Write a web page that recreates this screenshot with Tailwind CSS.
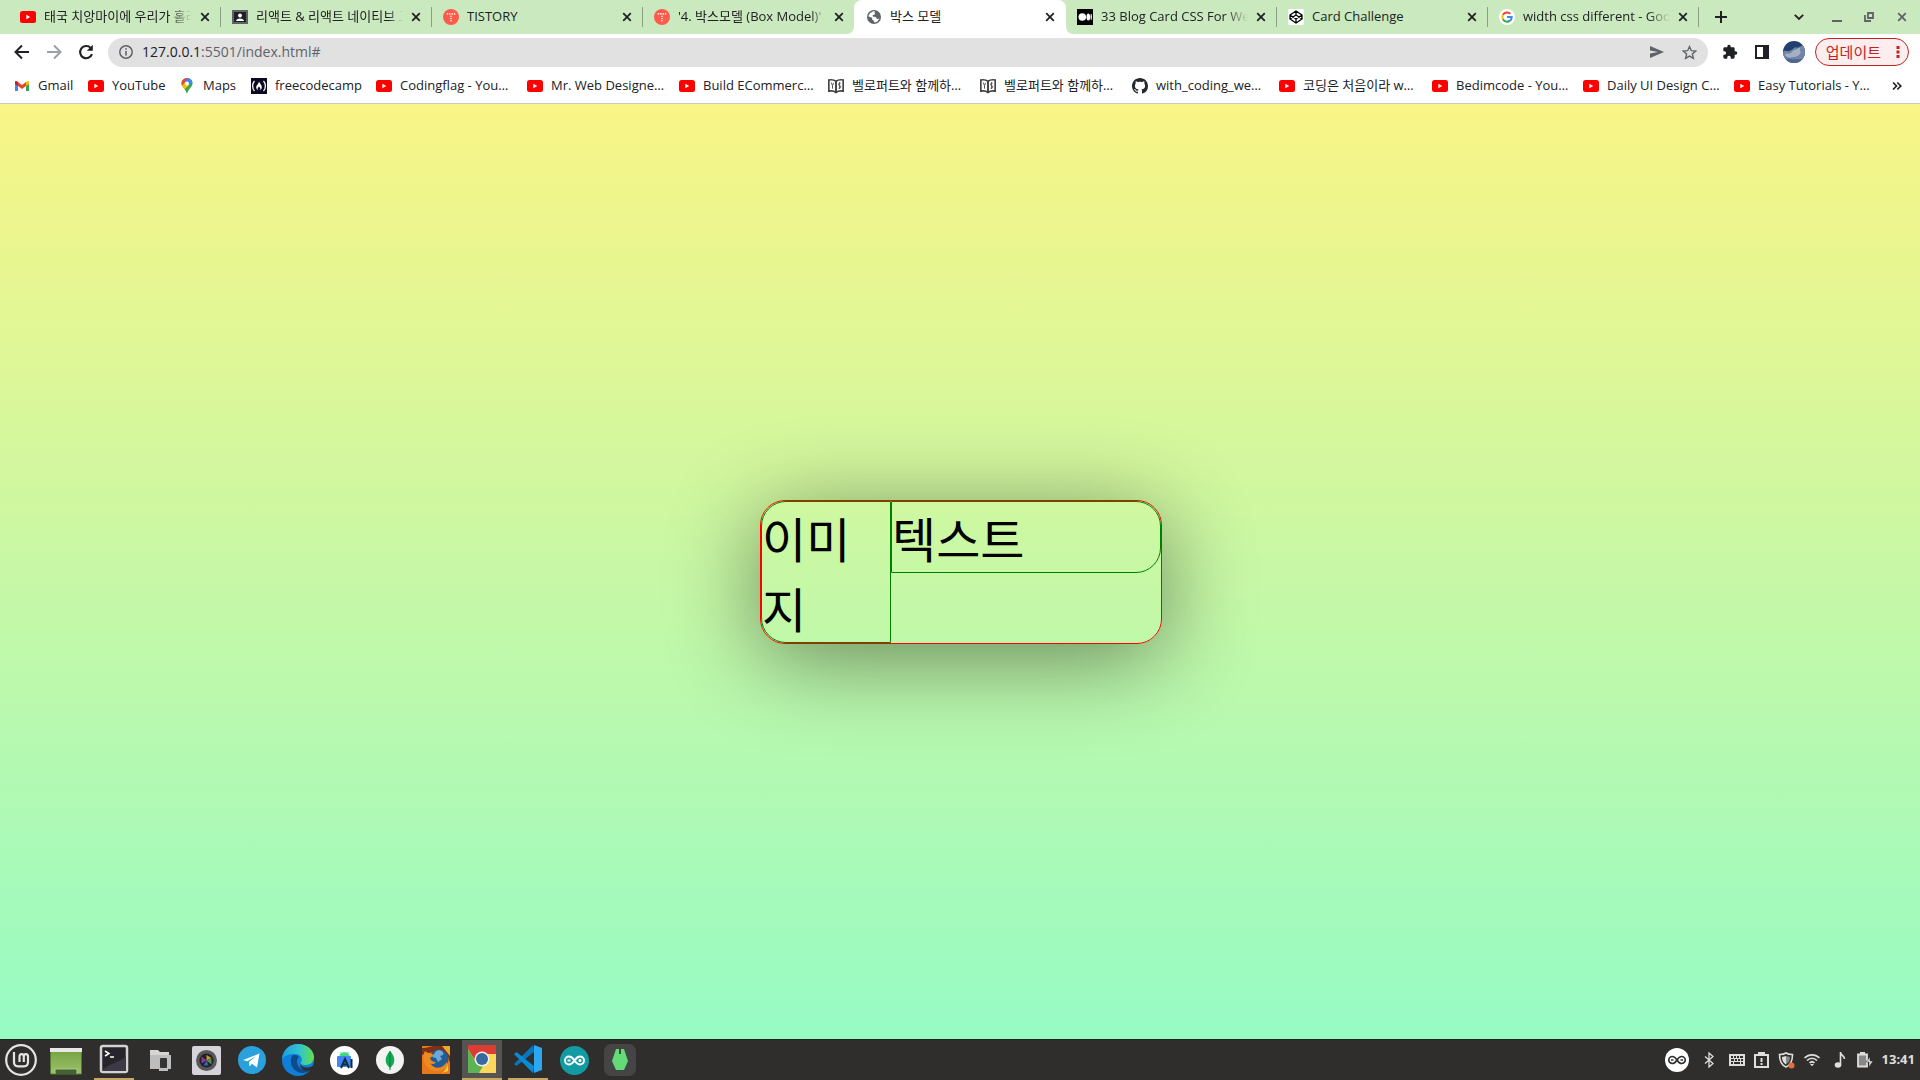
<!DOCTYPE html>
<html lang="ko">
<head>
<meta charset="utf-8">
<title>박스 모델</title>
<script src="https://cdn.jsdelivr.net/npm/@tailwindcss/browser@4"></script>
</head>
<body class="flex h-screen flex-col overflow-hidden bg-white font-['Open_Sans','Noto_Sans_CJK_KR',sans-serif] text-[13px] text-[#202124]">

<svg class="hidden" aria-hidden="true">
  <symbol id="yt" viewBox="0 0 16 16"><rect y="2" width="16" height="12" rx="2.5" fill="#f00"/><path d="M6.3 5.8v4.4L10.2 8z" fill="#fff"/></symbol>
  <symbol id="x" viewBox="0 0 10 10"><path d="M1.2 1.2l7.6 7.6M8.8 1.2L1.2 8.8" stroke="currentColor" stroke-width="1.8"/></symbol>
  <symbol id="tistory" viewBox="0 0 16 16"><circle cx="8" cy="8" r="8" fill="#ff5a4a"/><g fill="#fff"><circle cx="4.4" cy="4.9" r=".8"/><circle cx="6.8" cy="4.9" r=".8"/><circle cx="9.2" cy="4.9" r=".8"/><circle cx="11.6" cy="4.9" r=".8"/><circle cx="8" cy="7.2" r=".8"/><circle cx="8" cy="9.5" r=".8"/><circle cx="8" cy="11.8" r=".8"/></g></symbol>
  <symbol id="book" viewBox="0 0 16 16"><path d="M8 3.2C6 1.8 3.500 1.500.8 2v11.200c2.700-.5 5.200-.2 7.200 1.300 2-1.500 4.500-1.800 7.200-1.300V2C12.500 1.500 10 1.800 8 3.200zv11" fill="none" stroke="#444" stroke-width="1.700"/><path d="M3.200 4.500l1.300 3 1.200-2.700M4.500 7.500v3.200M12.500 5c-2.500-.3-2.500 2.300-1.200 2.500 2.500.4 1.500 3.300-.8 2.700M11.600 4v7" fill="none" stroke="#555" stroke-width="1"/><path d="M8 3v11" stroke="#444" stroke-width="1.700"/></symbol>
</svg>

<header class="shrink-0 border-b border-[#c8c8d0]">
  <div class="flex h-[34px] items-center bg-[#cbe9be] pl-[10px]">
    <nav class="flex h-full min-w-0 shrink-0 items-center" aria-label="탭">
      <div class="flex h-5 w-[211px] items-center gap-2 border-r border-[#8a9f83] pr-[10px] pl-[10px]">
        <svg class="size-4 shrink-0"><use href="#yt"/></svg>
        <span class="min-w-0 grow overflow-hidden mask-r-from-85% whitespace-nowrap">태국 치앙마이에 우리가 홀라</span>
        <button class="shrink-0" aria-label="닫기"><svg class="size-[10px]"><use href="#x"/></svg></button>
      </div>
      <div class="flex h-5 w-[211px] items-center gap-2 border-r border-[#8a9f83] pr-[10px] pl-[11px]">
        <svg class="size-4 shrink-0" viewBox="0 0 16 16"><path d="M0 1h16v14H0z" fill="#5f6368"/><path d="M2 3h12v10H2z" fill="#202124"/><circle cx="8" cy="6.500" r="1.900" fill="#fff"/><path d="M4 12c0-3.500 8-3.500 8 0z" fill="#fff"/></svg>
        <span class="min-w-0 grow overflow-hidden mask-r-from-90% whitespace-nowrap">리액트 &amp; 리액트 네이티브 고</span>
        <button class="shrink-0" aria-label="닫기"><svg class="size-[10px]"><use href="#x"/></svg></button>
      </div>
      <div class="flex h-5 w-[211px] items-center gap-2 border-r border-[#8a9f83] pr-[10px] pl-[11px]">
        <svg class="size-4 shrink-0"><use href="#tistory"/></svg>
        <span class="min-w-0 grow overflow-hidden whitespace-nowrap">TISTORY</span>
        <button class="shrink-0" aria-label="닫기"><svg class="size-[10px]"><use href="#x"/></svg></button>
      </div>
      <div class="flex h-5 w-[211px] items-center gap-2 pr-[10px] pl-[11px]">
        <svg class="size-4 shrink-0"><use href="#tistory"/></svg>
        <span class="min-w-0 grow overflow-hidden mask-r-from-90% whitespace-nowrap">'4. 박스모델 (Box Model)' =</span>
        <button class="shrink-0" aria-label="닫기"><svg class="size-[10px]"><use href="#x"/></svg></button>
      </div>
      <div class="relative flex h-full w-[212px] items-center gap-2 rounded-t-lg bg-white pr-[11px] pl-[12px]">
        <svg class="absolute bottom-0 -left-2 size-2" viewBox="0 0 8 8"><path d="M8 0v8H0c5 0 8-3 8-8z" fill="#fff"/></svg>
        <svg class="absolute -right-2 bottom-0 size-2" viewBox="0 0 8 8"><path d="M0 0v8h8C3 8 0 5 0 0z" fill="#fff"/></svg>
        <svg class="size-4 shrink-0" viewBox="0 0 16 16"><circle cx="8" cy="8" r="7" fill="#5f6368"/><path d="M9 2.300C7.600 3.500 9.800 4.300 8.800 5.300 7.900 6.100 6.600 5.800 6.600 7c0 .9 1.900.6 2.900.9 1.400.4.600 2 2 2 .9 0 1.400-.5 1.900-1-.6 2.700-2.700 4.400-5.200 4.500.5-1.500-.8-1.600-1.500-2.400-.7-.9-.2-2.100-1.200-2.600L2.500 7.400C2.900 4.700 5.700 2.200 9 2.300z" fill="#fff"/></svg>
        <span class="min-w-0 grow overflow-hidden whitespace-nowrap">박스 모델</span>
        <button class="shrink-0" aria-label="닫기"><svg class="size-[10px]"><use href="#x"/></svg></button>
      </div>
      <div class="flex h-5 w-[211px] items-center gap-2 border-r border-[#8a9f83] pr-[10px] pl-[11px]">
        <svg class="size-4 shrink-0" viewBox="0 0 16 16"><path d="M0 0h16v16H0z"/><circle cx="5.300" cy="8" r="3.800" fill="#fff"/><ellipse cx="11.300" cy="8" rx="1.800" ry="3.600" fill="#fff"/><ellipse cx="14.200" cy="8" rx=".7" ry="3.200" fill="#fff"/></svg>
        <span class="min-w-0 grow overflow-hidden mask-r-from-85% whitespace-nowrap">33 Blog Card CSS For We</span>
        <button class="shrink-0" aria-label="닫기"><svg class="size-[10px]"><use href="#x"/></svg></button>
      </div>
      <div class="flex h-5 w-[211px] items-center gap-2 border-r border-[#8a9f83] pr-[10px] pl-[11px]">
        <svg class="size-4 shrink-0" viewBox="0 0 16 16"><rect width="16" height="16" rx="2" fill="#fff"/><path d="M8 2l6 4v4l-6 4-6-4V6zM8 2v4M8 10v4M2 6l6 4 6-4M2 10l6-4 6 4" fill="none" stroke="#000" stroke-width="1.300" stroke-linejoin="round"/></svg>
        <span class="min-w-0 grow overflow-hidden whitespace-nowrap">Card Challenge</span>
        <button class="shrink-0" aria-label="닫기"><svg class="size-[10px]"><use href="#x"/></svg></button>
      </div>
      <div class="flex h-5 w-[211px] items-center gap-2 border-r border-[#8a9f83] pr-[10px] pl-[11px]">
        <svg class="size-4 shrink-0" viewBox="0 0 16 16"><circle cx="8" cy="8" r="8" fill="#fff"/><g fill="none" stroke-width="2"><path d="M3.900 5.900A4.700 4.700 0 0 1 11.300 4.700" stroke="#ea4335"/><path d="M3.900 10.100a4.700 4.700 0 0 1 0-4.200" stroke="#fbbc05"/><path d="M11 11.600a4.700 4.700 0 0 1-7.100-1.500" stroke="#34a853"/><path d="M8 8h4.700c0 1.500-.6 2.800-1.700 3.600" stroke="#4285f4"/></g></svg>
        <span class="min-w-0 grow overflow-hidden mask-r-from-85% whitespace-nowrap">width css different - Goog</span>
        <button class="shrink-0" aria-label="닫기"><svg class="size-[10px]"><use href="#x"/></svg></button>
      </div>
    </nav>
    <button class="ml-4" aria-label="새 탭"><svg class="size-3" viewBox="0 0 12 12"><path d="M6 0v12M0 6h12" stroke="#202124" stroke-width="2"/></svg></button>
    <div class="ml-auto flex items-center pr-[13px] text-[#5f6368]">
      <button aria-label="탭 검색"><svg class="size-[10px]" viewBox="0 0 10 10"><path d="M.8 2.800L5 7l4.200-4.200" fill="none" stroke="#202124" stroke-width="1.800"/></svg></button>
      <button class="ml-7" aria-label="최소화"><svg class="size-[10px]" viewBox="0 0 10 10"><path d="M0 9h10" stroke="currentColor" stroke-width="2"/></svg></button>
      <button class="ml-[22px]" aria-label="복원"><svg class="size-[10px]" viewBox="0 0 10 10"><path d="M4 1h5v5H4zM1 3v6h6" fill="none" stroke="currentColor" stroke-width="1.800"/></svg></button>
      <button class="ml-[23px]" aria-label="창 닫기"><svg class="size-[10px]"><use href="#x"/></svg></button>
    </div>
  </div>

  <div class="flex h-[36px] items-center pr-[11px] pl-[14px]">
    <button aria-label="뒤로"><svg class="size-4" viewBox="0 0 16 16"><path d="M15 8H2M8 1.500L1.500 8 8 14.500" fill="none" stroke="#202124" stroke-width="2"/></svg></button>
    <button class="ml-4" aria-label="앞으로"><svg class="size-4" viewBox="0 0 16 16"><path d="M1 8h13M8 1.500L14.500 8 8 14.500" fill="none" stroke="#9aa0a6" stroke-width="2"/></svg></button>
    <button class="ml-4" aria-label="새로고침"><svg class="size-4" viewBox="0 0 16 16"><path d="M14 10.200A6.100 6.100 0 1 1 12.600 3.800" fill="none" stroke="#202124" stroke-width="2.100"/><path d="M14.800.8v6H8.800z" fill="#202124"/></svg></button>
    <div class="ml-[14px] flex h-[29px] grow items-center rounded-full bg-[#e1e1e1] px-[11px]">
      <svg class="size-[14px] shrink-0" viewBox="0 0 14 14"><circle cx="7" cy="7" r="6.200" fill="none" stroke="#5f6368" stroke-width="1.500"/><path d="M7 6v4.500M7 3.200v1.600" stroke="#5f6368" stroke-width="1.600"/></svg>
      <label for="url" class="sr-only">주소</label>
      <div class="relative ml-[9px] h-5 grow text-[14px] leading-5">
        <input id="url" class="absolute inset-0 w-full bg-transparent text-transparent outline-none">
        <span class="pointer-events-none">127.0.0.1<span class="text-[#5f6368]">:5501/index.html#</span></span>
      </div>
      <button aria-label="보내기"><svg class="size-[14px]" viewBox="0 0 14 14"><path d="M0 1l14 6-14 6V8.500L8 7 0 5.500z" fill="#5f6368"/></svg></button>
      <button class="ml-[18px]" aria-label="북마크"><svg class="size-[15px]" viewBox="0 0 24 24"><path d="M12 2.500l2.900 6.600 7.100.6-5.400 4.700 1.600 7L12 17.700l-6.200 3.700 1.600-7L2 9.700l7.100-.6z" fill="none" stroke="#5f6368" stroke-width="2.200"/></svg></button>
    </div>
    <button class="ml-[14px]" aria-label="확장 프로그램"><svg class="size-4" viewBox="0 0 24 24"><path d="M20.500 11H19V7a2 2 0 0 0-2-2h-4V3.500a2.500 2.500 0 0 0-5 0V5H4a2 2 0 0 0-2 2v3.800h1.500a2.700 2.700 0 0 1 0 5.400H2V20c0 1.100.9 2 2 2h3.800v-1.500a2.700 2.700 0 0 1 5.400 0V22H17a2 2 0 0 0 2-2v-4h1.500a2.500 2.500 0 0 0 0-5z" fill="#202124"/></svg></button>
    <button class="ml-4" aria-label="사이드 패널"><svg class="size-4" viewBox="0 0 16 16"><path d="M1 1h14v14H1zM3 3v10h6V3z" fill="#202124" fill-rule="evenodd"/></svg></button>
    <button class="ml-[13px]" aria-label="프로필"><svg class="size-[22px]" viewBox="0 0 22 22"><clipPath id="av"><circle cx="11" cy="11" r="11"/></clipPath><g clip-path="url(#av)"><path d="M0 0h22v22H0z" fill="#22406f"/><path d="M0 11c2-3 4 0 6-1s3-1 5-3 3 1 5-1 4 0 6-2v18H0z" fill="#7186a6"/><path d="M2 14c2-3 4 0 6-2s2-3 4-3 2-2 5-2c-1 3 2 4 0 6s-4 3-6 3-6 2-9-2z" fill="#a3b1c4"/><path d="M0 18c6-1 14 2 22-1v5H0z" fill="#4d678f"/></g></svg></button>
    <button class="ml-[10px] flex h-7 items-center gap-[15px] rounded-full border border-[#c5221f] bg-[#fceeee] pr-2 pl-[10px] text-[15px] text-[#c5221f]"><span>업데이트</span><svg class="h-[14px] w-1" viewBox="0 0 4 14" fill="currentColor"><path d="M.5 1h3v3h-3zM.5 5.500h3v3h-3zM.5 10h3v3h-3z"/></svg></button>
  </div>

  <nav class="flex h-[33px] items-center pb-[2px] pl-[14px] whitespace-nowrap" aria-label="북마크">
    <a href="#" class="flex w-[74px] items-center gap-2"><svg class="size-4 shrink-0" viewBox="0 0 16 16"><path d="M1 3.500V13h3V7z" fill="#4285f4"/><path d="M15 3.500V13h-3V7z" fill="#34a853"/><path d="M4 4v4l4 3 4-3V4L8 7z" fill="#ea4335"/><path d="M1 4v2l3 2V4C2.500 2.500 1 3 1 4z" fill="#c5221f"/><path d="M15 4v2l-3 2V4c1.500-1.500 3-1 3 0z" fill="#fbbc04"/></svg>Gmail</a>
    <a href="#" class="flex w-[91px] items-center gap-2"><svg class="size-4 shrink-0"><use href="#yt"/></svg>YouTube</a>
    <a href="#" class="flex w-[72px] items-center gap-2"><svg class="size-4 shrink-0" viewBox="0 0 16 16"><clipPath id="pin"><path d="M8 0a5.500 5.500 0 0 1 5.500 5.500C13.500 9 9.500 10.500 8 16 6.500 10.500 2.500 9 2.500 5.500A5.500 5.500 0 0 1 8 0z"/></clipPath><g clip-path="url(#pin)"><path d="M0 0h16v16H0z" fill="#34a853"/><path d="M0 0h10L2 9z" fill="#ea4335"/><path d="M7-1h9v5l-4 2z" fill="#4285f4"/><path d="M2 9l5-6 3 4-6 6z" fill="#fbbc04"/><path d="M9 0l6 3-5 4-4-4z" fill="#4285f4"/></g><circle cx="8" cy="5.500" r="2" fill="#fff"/></svg>Maps</a>
    <a href="#" class="flex w-[125px] items-center gap-2"><svg class="size-4 shrink-0" viewBox="0 0 16 16"><path d="M0 0h16v16H0z" fill="#0a0a23"/><path d="M3.500 3C1 5.500 1 10.500 3.500 13M12.500 3c2.500 2.500 2.500 7.500 0 10" fill="none" stroke="#fff" stroke-width="1.300"/><path d="M8 3.500c.5 2 2.800 3 2.800 5.700 0 1.600-1 2.600-1.800 3 1-2-.2-2.500-1-3.700-.8 1.200-2 1.700-1 3.700-.8-.4-1.800-1.400-1.800-3C5.200 7 7.500 6.500 8 3.500z" fill="#fff"/></svg>freecodecamp</a>
    <a href="#" class="flex w-[151px] items-center gap-2"><svg class="size-4 shrink-0"><use href="#yt"/></svg>Codingflag - You…</a>
    <a href="#" class="flex w-[152px] items-center gap-2"><svg class="size-4 shrink-0"><use href="#yt"/></svg>Mr. Web Designe…</a>
    <a href="#" class="flex w-[149px] items-center gap-2"><svg class="size-4 shrink-0"><use href="#yt"/></svg>Build ECommerc…</a>
    <a href="#" class="flex w-[152px] items-center gap-2"><svg class="size-4 shrink-0"><use href="#book"/></svg>벨로퍼트와 함께하…</a>
    <a href="#" class="flex w-[152px] items-center gap-2"><svg class="size-4 shrink-0"><use href="#book"/></svg>벨로퍼트와 함께하…</a>
    <a href="#" class="flex w-[147px] items-center gap-2"><svg class="size-4 shrink-0" viewBox="0 0 16 16"><path fill="#24292f" d="M8 0C3.580 0 0 3.580 0 8c0 3.540 2.290 6.530 5.470 7.590.4.070.55-.17.55-.38 0-.19-.01-.82-.01-1.490-2.010.37-2.530-.49-2.690-.94-.09-.23-.48-.94-.82-1.130-.28-.15-.68-.52-.01-.53.63-.01 1.080.58 1.230.82.72 1.210 1.870.87 2.330.66.070-.52.280-.87.510-1.070-1.780-.2-3.640-.89-3.640-3.950 0-.87.310-1.590.82-2.150-.08-.2-.36-1.020.08-2.120 0 0 .67-.21 2.200.82.640-.18 1.320-.27 2-.27s1.360.09 2 .27c1.530-1.040 2.200-.82 2.200-.82.440 1.100.160 1.920.080 2.120.510.560.820 1.270.820 2.150 0 3.070-1.870 3.750-3.650 3.950.290.250.540.730.540 1.480 0 1.070-.01 1.930-.01 2.200 0 .210.150.460.550.380A8.010 8.010 0 0 0 16 8c0-4.420-3.580-8-8-8z"/></svg>with_coding_we…</a>
    <a href="#" class="flex w-[153px] items-center gap-2"><svg class="size-4 shrink-0"><use href="#yt"/></svg>코딩은 처음이라 w…</a>
    <a href="#" class="flex w-[151px] items-center gap-2"><svg class="size-4 shrink-0"><use href="#yt"/></svg>Bedimcode - You…</a>
    <a href="#" class="flex w-[151px] items-center gap-2"><svg class="size-4 shrink-0"><use href="#yt"/></svg>Daily UI Design C…</a>
    <a href="#" class="flex w-[151px] items-center gap-2"><svg class="size-4 shrink-0"><use href="#yt"/></svg>Easy Tutorials - Y…</a>
    <button class="mr-[18px] ml-auto" aria-label="더보기"><svg class="size-[10px]" viewBox="0 0 10 10"><path d="M1 1.500L4.500 5 1 8.500M5.300 1.500L8.800 5 5.300 8.500" fill="none" stroke="#202124" stroke-width="1.700"/></svg></button>
  </nav>
</header>

<main class="flex min-h-0 grow items-center justify-center bg-linear-to-b/srgb from-[#f9f586] to-[#96fbc4] pt-px pl-[2px] font-['Noto_Sans_CJK_KR',sans-serif] text-[48px] leading-[70px] text-black">
  <section class="flex w-[402px] items-start rounded-[25px] border border-[#f00] shadow-[0_15px_90px_rgba(0,0,0,0.46)]">
    <div class="w-[130px] rounded-l-[25px] border border-[#008000] break-all">이미<br>지</div>
    <div class="grow rounded-r-[25px] border border-[#008000]">텍스트</div>
  </section>
</main>

<footer class="flex h-[41px] shrink-0 items-center border-t border-[#222] bg-[#2f2e2d]">
  <button class="flex h-full w-[42px] items-center justify-center" aria-label="메뉴"><svg class="size-8" viewBox="0 0 32 32" fill="none" stroke="#e4e4e4"><circle cx="16" cy="16" r="14.800" stroke-width="2.200"/><path d="M9 8v10c0 2.800 1.500 4.300 4 4.300h6c2.500 0 4-1.500 4-4.300v-5.500c0-3.300-4.200-3.300-4.200 0v5.500M18.800 12.500c0-3.300-4.300-3.300-4.300 0v5.500" stroke-width="2.200"/></svg></button>
  <button class="flex h-full w-12 items-center justify-center" aria-label="바탕화면"><svg class="size-8" viewBox="0 0 32 32"><defs><linearGradient id="g" y2="1" x2="0"><stop stop-color="#75a13f"/><stop offset="1" stop-color="#9cc36d"/></linearGradient></defs><path d="M.5 5h31v25H.5z" fill="url(#g)" stroke="#547933"/><path d="M0 4h32v4H0z" fill="#e8e8e8"/><path d="M5 30v-5h22v5" fill="#45612f" stroke="#a9ce82"/></svg></button>
  <button class="ml-px flex h-full w-[46px] items-center justify-center" aria-label="터미널"><span class="flex h-full w-10 items-center justify-center border-b-2 border-[#c9a866]"><svg class="size-[30px]" viewBox="0 0 30 30"><rect x="2" y="2" width="26" height="26" rx="2" fill="#27242b" stroke="#d2d2d2" stroke-width="2.500"/><path d="M3 27c4-7 20-9 24-15v15z" fill="#3d3946"/><path d="M6 7l4 2.500L6 12M11 13h4" fill="none" stroke="#fff" stroke-width="1.500"/></svg></span></button>
  <button class="flex h-full w-[46px] items-center justify-center" aria-label="파일"><svg class="size-6" viewBox="0 0 24 24"><path d="M2 2h8l2 2h9v4H2z" fill="#d5d5d5"/><path d="M2 7h21v14h-3v2h-9v-2H2z" fill="#bdbdbd"/><rect x="12" y="10" width="7" height="10" rx="1" fill="#333"/></svg></button>
  <button class="flex h-full w-[46px] items-center justify-center" aria-label="카메라"><svg class="size-[29px]" viewBox="0 0 29 29"><rect width="29" height="29" rx="2" fill="#d7d3da"/><circle cx="14.500" cy="14.500" r="10.500" fill="#595959"/><circle cx="14.500" cy="14.500" r="7" fill="#231e2c"/><path d="M14.500 14.500V9l5 3z" fill="#c99b2d"/><path d="M14.500 14.500l5-2v6z" fill="#479652"/><path d="M14.500 14.500l2 5h-5z" fill="#3b63b5"/><path d="M14.500 14.500l-5-4v7z" fill="#8b3b8c"/></svg></button>
  <button class="flex h-full w-[46px] items-center justify-center" aria-label="텔레그램"><svg class="size-7" viewBox="0 0 28 28"><circle cx="14" cy="14" r="14" fill="#2aa1dd"/><path d="M5 14l16.500-6.500L19 21.500l-5-3.700-2.500 2.700-.5-4.500 7-6-8.500 5.300z" fill="#fff"/></svg></button>
  <button class="flex h-full w-[46px] items-center justify-center" aria-label="엣지"><svg class="size-8" viewBox="0 0 32 32"><defs><linearGradient id="e"><stop stop-color="#1b9de2"/><stop offset=".55" stop-color="#32c5cc"/><stop offset="1" stop-color="#65dd4f"/></linearGradient></defs><circle cx="16" cy="16" r="16" fill="#0f7fd9"/><path d="M0 15C1 5 8 0 16 0c10 0 16 7 16 13 0 5-4 8-8 8-4 .2-6-1.500-5-3 2-3 0-8-6-8C7 10 2 12 0 15z" fill="url(#e)"/><path d="M11 11c-5 6-1 17 9 18 4 0 7-1 9-4-8 3-14-2-14-7 0-3 1-4 2-5-2-2-4-2-6-2z" fill="#114a8b"/><path d="M18 20c2 4 8 5 14 1v4l-3 1c-6 2-11-1-11-6z" fill="#2f2e2d"/></svg></button>
  <button class="flex h-full w-[46px] items-center justify-center" aria-label="안드로이드 스튜디오"><svg class="size-[29px]" viewBox="0 0 29 29"><circle cx="14.500" cy="14.500" r="14.500" fill="#fff"/><rect x="7" y="10" width="14" height="11" rx="1" fill="#4285f4"/><path d="M9.500 10c0-5 10-5 10 0z" fill="#3ddc84"/><path d="M10.500 6l1.500 2M18.500 6L17 8" stroke="#3ddc84"/><path d="M11 22l4-9 4 9M13 18.500h4M21.500 13v9" fill="none" stroke="#073042" stroke-width="2"/></svg></button>
  <button class="flex h-full w-[46px] items-center justify-center" aria-label="MongoDB"><svg class="size-7" viewBox="0 0 28 28"><circle cx="14" cy="14" r="14" fill="#f3f3f3"/><path d="M14 5c6 6 5.500 13 0 17-5.500-4-6-11 0-17z" fill="#13aa52"/><path d="M14 5v19" stroke="#0c7c3b"/></svg></button>
  <button class="flex h-full w-[46px] items-center justify-center" aria-label="Firefox"><svg class="size-7" viewBox="0 0 28 28"><path d="M0 0h28v28H0z" fill="#e7791c"/><path d="M0 2c8 0 7-2 14-2h14v16C22 7 14 3 0 9z" fill="#7c3017"/><path d="M20 0h8v10z" fill="#f0a52b"/><circle cx="17" cy="13" r="9.500" fill="#245b95"/><path d="M14 5c4-2 9 1 7 4l-3 1 2 3-4 3-2-4-4-1z" fill="#6caad5"/><path d="M3 5c3 3 6 2 9 4l-4 3c1 3 3 4 6 4-2 3-5 2-6 1 2 6 12 7 17-1 1 6-5 10-12 9C3 24-1 12 3 5z" fill="#ef8a20"/><path d="M26 10v15l-6 2c5-4 7-10 6-17z" fill="#f7cf3b"/></svg></button>
  <button class="flex h-full w-[46px] items-center justify-center" aria-label="Chrome"><span class="flex h-full w-10 items-center justify-center border-b-2 border-[#c9a866] bg-[#555453]"><svg class="size-7" viewBox="0 0 28 28"><path d="M0 0h28v28H0z" fill="#fbd75b"/><path d="M0 0h28v9H14L8 17 0 4z" fill="#dd3c35"/><path d="M0 4l9 15 6 2-4 7H0z" fill="#5db351"/><circle cx="14" cy="14" r="7.500" fill="#f2f2f2"/><circle cx="14" cy="14" r="6" fill="#38699f"/></svg></span></button>
  <button class="flex h-full w-[46px] items-center justify-center" aria-label="VS Code"><span class="flex h-full w-10 items-center justify-center border-b-2 border-[#c9a866]"><svg class="size-7" viewBox="0 0 28 28"><path d="M20 7L2.500 21 0 19 19 0z" fill="#0877b9"/><path d="M20 21L2.500 7 0 9l19 19z" fill="#0b8bd2"/><path d="M20 0l8 3v22l-8 3z" fill="#2aa8f2"/></svg></span></button>
  <button class="flex h-full w-[46px] items-center justify-center" aria-label="Arduino"><svg class="size-[29px]" viewBox="0 0 29 29"><circle cx="14.500" cy="14.500" r="14.500" fill="#129ba3"/><path d="M14.500 14.500c-2-3-3.500-4-5.500-4a4 4 0 0 0 0 8c2 0 3.500-1 5.500-4s3.500-4 5.500-4a4 4 0 0 1 0 8c-2 0-3.500-1-5.500-4zM7.500 14.500h3M18.500 14.500h3M20 13v3" fill="none" stroke="#fff" stroke-width="1.900"/></svg></button>
  <button class="flex h-full w-[46px] items-center justify-center" aria-label="앱"><svg class="size-8" viewBox="0 0 32 32"><rect width="32" height="32" rx="7" fill="#454545"/><path d="M12 5h3v5h2V5h3l4 12-4 9h-8L8 17z" fill="#63dc78"/></svg></button>

  <div class="ml-auto flex items-center pr-[5px] text-[#dedede]">
    <svg class="size-6" viewBox="0 0 24 24"><circle cx="12" cy="12" r="12" fill="#fff"/><path d="M12 12c-1.500-2.500-3-3.500-4.700-3.500a3.500 3.500 0 0 0 0 7c1.700 0 3.200-1 4.700-3.500s3-3.500 4.700-3.500a3.500 3.500 0 0 1 0 7c-1.700 0-3.200-1-4.700-3.500zM6 12h2.500M15.500 12H18" fill="none" stroke="#333" stroke-width="1.700"/></svg>
    <svg class="ml-3 size-4" viewBox="0 0 16 16"><path d="M4 4.500l8 7L8 15V1l4 3.500-8 7" fill="none" stroke="currentColor" stroke-width="1.300"/></svg>
    <svg class="ml-3 size-4" viewBox="0 0 16 16"><path fill-rule="evenodd" d="M0 2h16v12H0zM2 4v2h2V4zm3 0v2h2V4zm3 0v2h2V4zm3 0v2h3V4zM2 7v2h3V7zm4 0v2h2V7zm3 0v2h2V7zm3 0v2h2V7zM2 10v2h2v-2zm3 0v2h6v-2zm7 0v2h2v-2z" fill="currentColor"/></svg>
    <svg class="ml-[9px] h-4 w-[15px]" viewBox="0 0 15 16"><path d="M1 3h13v12H1z" fill="none" stroke="currentColor" stroke-width="2"/><path d="M4 0h7v4H4z" fill="currentColor"/><path d="M7.500 6v4M7.500 11v2" stroke="currentColor" stroke-width="2"/></svg>
    <svg class="ml-[9px] size-[17px]" viewBox="0 0 17 17"><path d="M8 1c2 1.500 4 1.500 6.500 1.500C14.500 9 13 13 8 15 3 13 1.500 9 1.500 2.500 4 2.500 6 2.500 8 1z" fill="none" stroke="currentColor" stroke-width="1.600"/><path d="M8 4v8.500C5 11 4 8 4 5z" fill="currentColor"/><path d="M8 4v8.500c3-1.500 4-4.500 4-7.500z" fill="#888"/><circle cx="13.500" cy="13.500" r="3" fill="#e07037"/></svg>
    <svg class="ml-[9px] size-4" viewBox="0 0 16 16"><path d="M.5 6c4.500-4.300 10.500-4.300 15 0M3 8.500c3-3 7-3 10 0M5.500 11c1.500-1.500 3.500-1.500 5 0" fill="none" stroke="currentColor" stroke-width="1.700"/><path d="M6 12l2 2.300 2-2.300z" fill="currentColor"/></svg>
    <svg class="ml-3 size-4" viewBox="0 0 16 16"><ellipse cx="6" cy="13" rx="3.300" ry="2.800" fill="currentColor"/><path d="M8.500 13V0c0 4 4 3 4 7" fill="none" stroke="currentColor" stroke-width="1.600"/></svg>
    <svg class="ml-[9px] size-4" viewBox="0 0 16 16"><path d="M1 2.500h9v12H1z" fill="#888" stroke="currentColor" stroke-width="1.800"/><path d="M3 0h5v2H3z" fill="currentColor"/><path d="M13 5l-4 5h3v5l4-6h-3z" fill="currentColor" stroke="#2f2e2d" stroke-width=".5"/></svg>
    <time class="ml-[9px] font-['Noto_Sans',sans-serif] text-[13px] font-bold">13:41</time>
  </div>
</footer>
</body>
</html>
